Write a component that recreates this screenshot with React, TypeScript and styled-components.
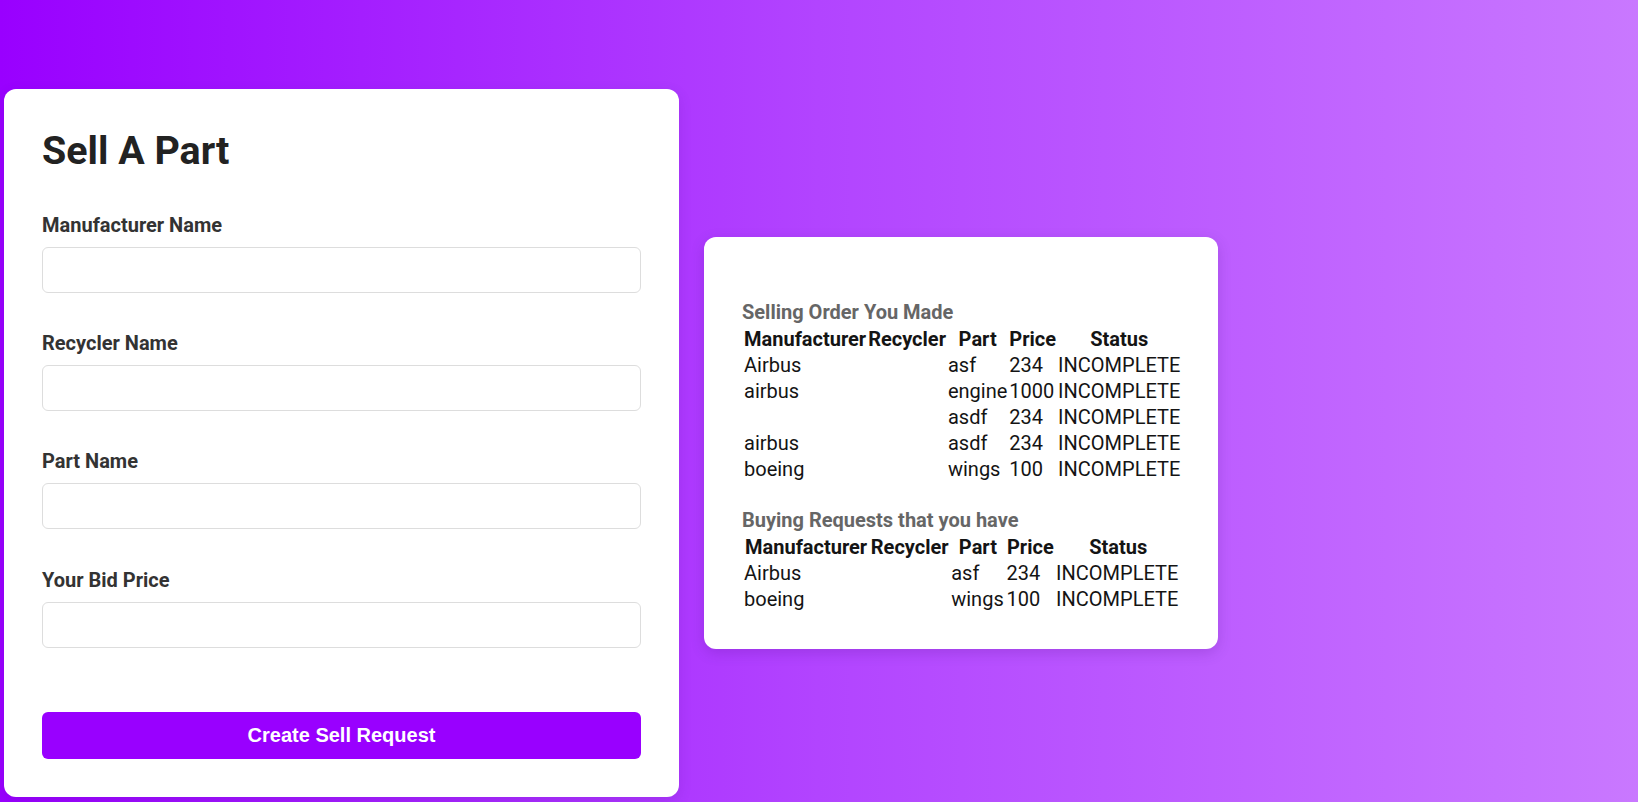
import React from "react";
import styled, { createGlobalStyle } from "styled-components";

const GlobalStyle = createGlobalStyle`
  html, body {
    margin: 0;
    padding: 0;
  }
  body {
    font-family: Roboto, "Noto Sans", sans-serif;
    font-size: 20px;
    background: linear-gradient(to right, #9900ff 0%, #b244ff 50%, #c978ff 100%);
    min-height: 100vh;
  }
  * { box-sizing: border-box; }
`;

const Page = styled.div`
  display: flex;
  align-items: center;
  gap: 25px;
  padding: 89px 0 7px 4px;
  min-height: 100vh;
`;

const FormCard = styled.form`
  width: 675px;
  background: #ffffff;
  border-radius: 12px;
  padding: 38px 38px 38px;
  box-shadow: 0 4px 14px rgba(60, 0, 110, 0.12);
  display: flex;
  flex-direction: column;
`;

const Title = styled.h1`
  margin: 0 0 38.6px;
  font-size: 39.4px;
  font-weight: 700;
  line-height: 47px;
  color: #222222;
`;

const Field = styled.div`
  display: flex;
  flex-direction: column;
  margin-bottom: 38.4px;
`;

const Label = styled.label`
  font-size: 20px;
  font-weight: 700;
  line-height: 24px;
  color: #333333;
  margin-bottom: 10px;
`;

const Input = styled.input`
  width: 100%;
  height: 46px;
  border: 1px solid #dddddd;
  border-radius: 6px;
  background: #ffffff;
  padding: 0 12px;
  font-size: 18px;
  font-family: Roboto, sans-serif;
  outline: none;
`;

const SubmitButton = styled.button`
  margin-top: 26.3px;
  width: 100%;
  height: 47px;
  border: none;
  border-radius: 6px;
  background: #9900ff;
  color: #ffffff;
  font-family: "Liberation Sans", Arial, sans-serif;
  font-size: 20px;
  font-weight: 700;
  cursor: pointer;
`;

const OrdersCard = styled.div`
  background: #ffffff;
  border-radius: 12px;
  padding: 63px 36px 36px 38px;
  box-shadow: 0 4px 14px rgba(60, 0, 110, 0.18);
`;

const SectionTitle = styled.h3<{ $spaced?: boolean }>`
  margin: ${(p) => (p.$spaced ? "25px" : "0")} 0 1px;
  font-size: 20px;
  font-weight: 700;
  line-height: 24px;
  color: #666666;
`;

const Table = styled.table`
  width: 100%;
  border-spacing: 2px 2px;
  font-size: 20px;
  color: #141414;
`;

const Th = styled.th`
  padding: 0;
  line-height: 24px;
  font-weight: 700;
  text-align: center;
  white-space: nowrap;
`;

const Td = styled.td`
  padding: 0;
  line-height: 24px;
  text-align: left;
  white-space: nowrap;
`;

type Order = {
  manufacturer: string;
  recycler: string;
  part: string;
  price: string;
  status: string;
};

const selling: Order[] = [
  { manufacturer: "Airbus", recycler: "", part: "asf", price: "234", status: "INCOMPLETE" },
  { manufacturer: "airbus", recycler: "", part: "engine", price: "1000", status: "INCOMPLETE" },
  { manufacturer: "", recycler: "", part: "asdf", price: "234", status: "INCOMPLETE" },
  { manufacturer: "airbus", recycler: "", part: "asdf", price: "234", status: "INCOMPLETE" },
  { manufacturer: "boeing", recycler: "", part: "wings", price: "100", status: "INCOMPLETE" },
];

const buying: Order[] = [
  { manufacturer: "Airbus", recycler: "", part: "asf", price: "234", status: "INCOMPLETE" },
  { manufacturer: "boeing", recycler: "", part: "wings", price: "100", status: "INCOMPLETE" },
];

const OrderTable: React.FC<{ rows: Order[] }> = ({ rows }) => (
  <Table>
    <thead>
      <tr>
        <Th>Manufacturer</Th>
        <Th>Recycler</Th>
        <Th>Part</Th>
        <Th>Price</Th>
        <Th>Status</Th>
      </tr>
    </thead>
    <tbody>
      {rows.map((r, i) => (
        <tr key={i}>
          <Td>{r.manufacturer}</Td>
          <Td>{r.recycler}</Td>
          <Td>{r.part}</Td>
          <Td>{r.price}</Td>
          <Td>{r.status}</Td>
        </tr>
      ))}
    </tbody>
  </Table>
);

const fields = ["Manufacturer Name", "Recycler Name", "Part Name", "Your Bid Price"];

export default function App() {
  return (
    <>
      <GlobalStyle />
      <Page>
        <FormCard onSubmit={(e) => e.preventDefault()}>
          <Title>Sell A Part</Title>
          {fields.map((f) => (
            <Field key={f}>
              <Label>{f}</Label>
              <Input type="text" />
            </Field>
          ))}
          <SubmitButton type="submit">Create Sell Request</SubmitButton>
        </FormCard>
        <OrdersCard>
          <SectionTitle>Selling Order You Made</SectionTitle>
          <OrderTable rows={selling} />
          <SectionTitle $spaced>Buying Requests that you have</SectionTitle>
          <OrderTable rows={buying} />
        </OrdersCard>
      </Page>
    </>
  );
}
